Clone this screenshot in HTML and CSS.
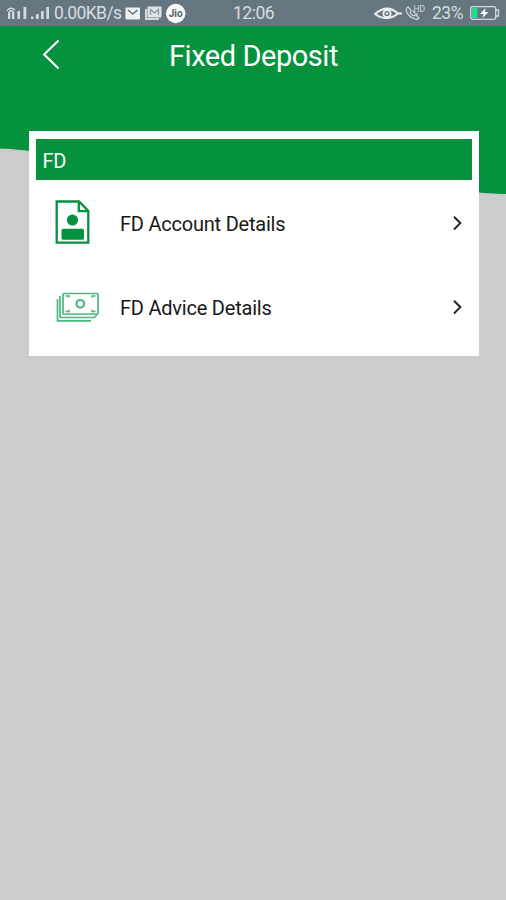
FILE: index.html
```html
<!DOCTYPE html>
<html lang="en">
<head>
<meta charset="utf-8">
<title>Fixed Deposit</title>
<link rel="stylesheet" href="styles.css">
</head>
<body>
<div class="status">
  <svg class="signals" width="54" height="26" viewBox="0 0 54 26">
    <g fill="none" stroke="#d3dadd" stroke-width="1.400"><path d="M7 11q3-5 8-1M8.500 13q2.500-4 5-1"/></g>
    <path fill="#d3dadd" d="M8 13h2.300v6H8zM12 12h2.300v7H12zM17.500 11h2.500v8h-2.500zM23.500 7h2.800v12h-2.800zM31 16.500h2.500V19H31zM36 14h2.700v5H36zM41 11h2.700v8H41zM46.300 7h2.700v12h-2.700z"/>
  </svg>
  <span class="speed">0.00KB/s</span>
  <svg class="notices" width="66" height="26" viewBox="0 0 66 26">
    <rect x="3.500" y="7.500" width="14.500" height="12" rx="1" fill="#edf1f2"/>
    <path d="M6 10l4.700 4L15.500 10" fill="none" stroke="#667681" stroke-width="1.600"/>
    <path d="M24 9v10h13" fill="none" stroke="#d3dadd" stroke-width="2"/>
    <rect x="25.500" y="6.500" width="14" height="11" rx="1" fill="#dfe5e7"/>
    <path d="M28.500 15v-5.500l4 3.500 4-3.500V15" fill="none" stroke="#8b979f" stroke-width="1.300"/>
    <circle cx="53.700" cy="13.500" r="9.700" fill="#fafcfc"/>
    <text class="jio" x="53.700" y="17" text-anchor="middle">Jio</text>
  </svg>
  <span class="clock">12:06</span>
  <svg class="eye" width="54" height="26" viewBox="0 0 54 26">
    <path d="M1 14Q13 3.500 24 13.500 13 22.500 1 14zM23 13.500h5" fill="none" stroke="#edf1f2" stroke-width="2"/>
    <circle cx="13" cy="13.500" r="3.600" fill="none" stroke="#edf1f2" stroke-width="2"/>
    <circle cx="13" cy="13.500" r="1.200" fill="#edf1f2"/>
    <path d="M34 7l3 3-1 2q1 3 4 4l2-1 3 3q-2 2-4 1-7-2-9-9 0-2 2-3zM38.500 10.500l3 3M43 13v2h-3" fill="none" stroke="#d3dadd" stroke-width="1.100"/>
    <text class="hd" x="39.500" y="11.500">HD</text>
  </svg>
  <span class="percent">23%</span>
  <svg width="32" height="26" viewBox="0 0 32 26">
    <rect x=".7" y="6.700" width="25" height="12.600" rx="2" fill="none" stroke="#d3dadd" stroke-width="1.300"/>
    <path d="M26 10h2.500v6H26" fill="none" stroke="#d3dadd" stroke-width="1.300"/>
    <path d="M2 8h5.500v10H2z" fill="#1fdb91"/>
    <path d="M15.500 8l-5.500 6h3.500l-1 4 6-6H15z" fill="#f4f7f7"/>
  </svg>
</div>
<header class="hero">
  <svg class="wave" width="506" height="170" viewBox="0 0 506 170"><path fill="#05923f" d="M0 0H506V168C493 168 484 167 468 165.500L40 126C24 124.500 16 123 0 122.500z"/></svg>
  <div class="bar">
    <svg class="back" width="20" height="32" viewBox="0 0 20 32"><path d="M17.500 1.500L3.200 15.500l14.300 14" fill="none" stroke="#fff" stroke-width="2.200"/></svg>
    <h1>Fixed Deposit</h1>
  </div>
</header>
<main class="card">
  <h2>FD</h2>
  <div class="row">
    <svg class="icon" width="46" height="48" viewBox="0 0 46 48">
      <path d="M2.700 3.500H25l9.300 9.500v31.700H2.700zM24.800 3.500v9.700h9.500" fill="none" stroke="#05923f" stroke-width="2.300"/>
      <circle cx="18.500" cy="22" r="5.600" fill="#05923f"/>
      <rect x="7.500" y="30.800" width="22.500" height="11" rx="1.500" fill="#05923f"/>
    </svg>
    <span class="label">FD Account Details</span>
    <svg class="chevron" width="12" height="16" viewBox="0 0 12 16"><path d="M2 1.700l6.300 6.400L2 14.500" fill="none" stroke="#222" stroke-width="2"/></svg>
  </div>
  <div class="row">
    <svg class="icon" width="46" height="48" viewBox="0 0 46 48">
      <g fill="none" stroke="#4bb77c" stroke-width="1.700">
        <rect x="9" y="11.500" width="35" height="20.500" rx="1"/>
        <path d="M6 14v21.500h34.500l2.500-3M3.500 17v21.800H37"/>
        <circle cx="26.300" cy="21.800" r="3.800" stroke-width="2.200"/>
        <path d="M11.500 14h3.500v1.800M38 15.800V14h3.500M11.500 29.500h3.500v-1.800M38 27.700v1.800h3.500" stroke-width="1.500"/>
      </g>
    </svg>
    <span class="label">FD Advice Details</span>
    <svg class="chevron" width="12" height="16" viewBox="0 0 12 16"><path d="M2 1.700l6.300 6.400L2 14.500" fill="none" stroke="#222" stroke-width="2"/></svg>
  </div>
</main>
</body>
</html>
```

FILE: styles.css
```css
* { box-sizing: border-box; }
body {
  margin: 0;
  min-height: 900px;
  background: #ccc;
  font-family: Roboto, "Liberation Sans", sans-serif;
}
svg { display: block; flex: none; }
.status {
  display: grid;
  grid-template-columns: 54px 68px 111px 141px 58px 38px 36px;
  height: 26px;
  background: #667681;
  color: #d6dde0;
  line-height: 27px;
  white-space: nowrap;
}
.speed { font-size: 17.5px; letter-spacing: -0.6px; }
.clock { font-size: 17.5px; letter-spacing: -0.5px; }
.jio { font: bold 10px Roboto, sans-serif; fill: #53636d; }
.hd { font: 8.5px Roboto, sans-serif; fill: #d3dadd; }
.percent { font-size: 17.5px; letter-spacing: -0.5px; }
.hero {
  position: relative;
  height: 105px;
}
.wave {
  position: absolute;
  top: 0;
  left: 0;
  z-index: -1;
}
.bar {
  display: grid;
  align-items: center;
  height: 58px;
}
.back { grid-area: 1 / 1; margin: -3px 0 0 41px; }
h1 {
  grid-area: 1 / 1;
  margin: 0;
  padding-left: 1px;
  color: #fff;
  font-size: 29px;
  font-weight: 400;
  letter-spacing: -0.45px;
  line-height: 60px;
  text-align: center;
}
.card {
  width: 450px;
  height: 225px;
  margin-left: 28.5px;
  padding: 7.5px 7px 0;
  background: #fff;
}
h2 {
  height: 41.5px;
  margin: 0;
  padding-left: 7px;
  background: #05923f;
  color: #fff;
  font-size: 20px;
  font-weight: 400;
  letter-spacing: -0.3px;
  line-height: 44px;
}
.row {
  display: grid;
  grid-template-columns: 66px 1fr 12px;
  align-items: center;
  height: 84px;
  margin: 0 8px 0 18.5px;
}
.label {
  padding-top: 3px;
  color: #181818;
  font-size: 20px;
  letter-spacing: -0.22px;
  line-height: 24px;
}
.chevron { margin-top: 1px; }
```
